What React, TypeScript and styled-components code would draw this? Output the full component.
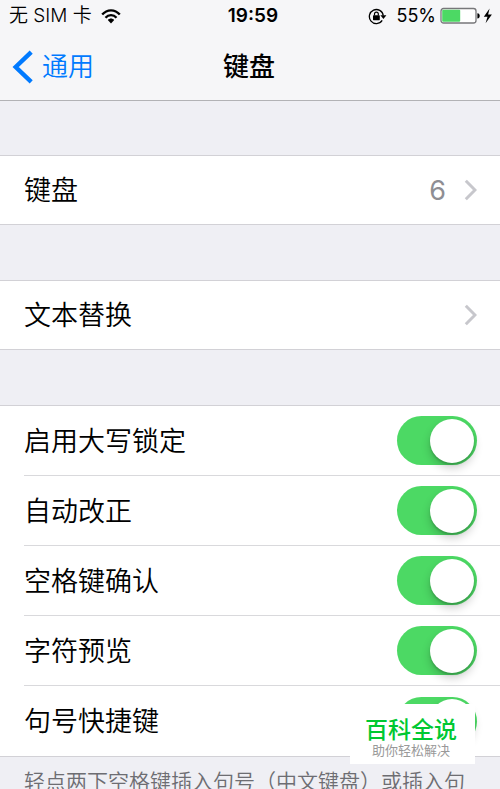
import { useId, useState } from "react";
import styled, { createGlobalStyle } from "styled-components";

const GlobalStyle = createGlobalStyle`
  * { box-sizing: border-box; }
  body {
    margin: 0;
    overflow: hidden;
    background: #efeff4;
    color: #000;
    font-family: Inter, "Noto Sans CJK SC", sans-serif;
    -webkit-font-smoothing: antialiased;
  }
`;

const Screen = styled.div`
  position: relative;
  height: 100vh;
  overflow: hidden;
`;

const Header = styled.header`
  background: #f6f6f8;
  border-bottom: 1px solid #b2b2b5;
`;

const StatusBar = styled.div`
  display: grid;
  grid-template-columns: 1fr auto 1fr;
  align-items: center;
  height: 32px;
  padding: 0 7px 0 9px;
  font-size: 18px;
  line-height: 32px;
`;

const StatusGroup = styled.div<{ $end?: boolean }>`
  display: flex;
  align-items: center;
  justify-content: ${(p) => (p.$end ? "flex-end" : "flex-start")};
  white-space: nowrap;
`;

const Carrier = styled.span`
  margin-right: 9px;
  font-size: 19px;
  font-weight: 350;
`;

const Clock = styled.time`
  padding-left: 4px;
  font-size: 19px;
  font-weight: 600;
`;

const Percent = styled.span`
  margin: 0 4px 0 9px;
`;

const NavBar = styled.nav`
  display: grid;
  grid-template-columns: 1fr auto 1fr;
  align-items: center;
  height: 68px;
  padding: 2px 14px 0 12px;
`;

const BackLink = styled.a`
  display: flex;
  align-items: center;
  gap: 9px;
  color: #007aff;
  font-size: 26px;
  font-weight: 350;
  line-height: 40px;
  text-decoration: none;
`;

const Title = styled.h1`
  margin: 0;
  font-size: 26px;
  font-weight: 500;
  line-height: 40px;
`;

const Settings = styled.main`
  display: grid;
  row-gap: 55px;
  padding-top: 54px;
`;

const Group = styled.section`
  padding-left: 24px;
  background: #fff;
  border-top: 1px solid #d2d1d6;
  border-bottom: 1px solid #d2d1d6;
`;

const LinkRow = styled.a`
  display: flex;
  align-items: center;
  height: 68px;
  padding-right: 23px;
  color: inherit;
  font-size: 27px;
  text-decoration: none;
`;

const RowLabel = styled.span`
  flex: 1;
  padding-top: 2px;
  font-weight: 350;
  line-height: 40px;
`;

const Count = styled.span`
  margin-right: 18px;
  color: #8e8e93;
  font-size: 27px;
`;

const SwitchRow = styled.label`
  display: flex;
  align-items: center;
  height: 70px;
  padding-right: 23px;
  font-size: 27px;
  border-bottom: 1px solid #d9d9dc;

  &:last-child { border-bottom: 0; }
`;

const Switch = styled.input`
  appearance: none;
  display: flex;
  align-items: center;
  width: 80px;
  height: 49px;
  margin: 0;
  padding: 0 3px;
  border-radius: 25px;
  background: #e5e5ea;

  &::before {
    content: "";
    width: 44px;
    height: 44px;
    border-radius: 50%;
    background: #fff;
    box-shadow: 0 5px 10px rgba(0, 0, 0, 0.2), 0 2px 2px rgba(0, 0, 0, 0.15);
  }

  &:checked {
    justify-content: flex-end;
    background: #4cd964;
  }
`;

const FootNote = styled.p`
  margin: 0;
  padding: 9px 0 0 24px;
  color: #6d6d72;
  font-size: 21px;
  font-weight: 350;
  line-height: 32px;
  white-space: nowrap;
`;

const Watermark = styled.aside`
  position: absolute;
  right: 25px;
  bottom: 25px;
  width: 125px;
  height: 60px;
  padding: 13px 3px 0 0;
  background: #fff;
  text-align: center;
`;

const Brand = styled.div`
  color: #00c832;
  font-size: 23px;
  font-weight: 500;
  line-height: 26px;
`;

const Slogan = styled.div`
  color: #999;
  font-size: 13px;
  line-height: 14px;
`;

const WifiIcon = () => (
  <svg width="20" height="15" viewBox="0 0 20 15" aria-hidden="true">
    <g fill="none" stroke="#000" strokeWidth="2.3">
      <path d="M1.2 5.6C6-.1 14-.1 18.8 5.6" />
      <path d="M4.5 8.8c3-3.5 8-3.5 11 0" />
    </g>
    <path d="M6.8 11.1c1.8-2 4.6-2 6.4 0L10 14.6z" />
  </svg>
);

const RotationLockIcon = () => (
  <svg width="19" height="17" viewBox="0 0 19 17" aria-hidden="true">
    <path d="M14.2 12.4A7 7 0 1 1 15.3 7.6" fill="none" stroke="#000" strokeWidth="1.3" />
    <path d="M12.4 7.3h6L15.4 11z" />
    <rect x="5" y="7.3" width="6.8" height="4.9" rx="0.6" />
    <path d="M6.5 7.6V6a1.9 1.9 0 0 1 3.8 0v1.6" fill="none" stroke="#000" strokeWidth="1.2" />
  </svg>
);

const BatteryIcon = () => (
  <svg width="53" height="18" viewBox="0 0 53 18" aria-hidden="true">
    <rect x="1" y="1.5" width="35" height="14.5" rx="2.5" fill="#fff" stroke="#77777a" strokeWidth="1.3" />
    <rect x="2.2" y="2.7" width="18" height="12.1" rx="1" fill="#4cd964" />
    <path d="M37.4 6.2c3.1 0 3.1 5.2 0 5.2z" />
    <path d="M49.6 1.5L43.8 9.7h3.7l-1.9 6.5 6.3-8.6h-3.8z" />
  </svg>
);

const BackIcon = () => (
  <svg width="21" height="34" viewBox="0 0 21 34" aria-hidden="true">
    <path d="M19.2 2.2L3.7 17l15.5 14.8" fill="none" stroke="#007aff" strokeWidth="4.4" />
  </svg>
);

const DisclosureIcon = () => (
  <svg width="13" height="22" viewBox="0 0 13 22" aria-hidden="true">
    <path d="M1.8 1.8L11 11l-9.2 9.2" fill="none" stroke="#c7c7cc" strokeWidth="3" />
  </svg>
);

function SwitchItem({ label }: { label: string }) {
  const id = useId();
  const [on, setOn] = useState(true);
  return (
    <SwitchRow htmlFor={id}>
      <RowLabel>{label}</RowLabel>
      <Switch id={id} type="checkbox" role="switch" checked={on} onChange={() => setOn(!on)} />
    </SwitchRow>
  );
}

const options = ["启用大写锁定", "自动改正", "空格键确认", "字符预览", "句号快捷键"];

export default function App() {
  return (
    <Screen lang="zh-CN">
      <GlobalStyle />
      <Header>
        <StatusBar>
          <StatusGroup>
            <Carrier>无 SIM 卡</Carrier>
            <WifiIcon />
          </StatusGroup>
          <Clock>19:59</Clock>
          <StatusGroup $end>
            <RotationLockIcon />
            <Percent>55%</Percent>
            <BatteryIcon />
          </StatusGroup>
        </StatusBar>
        <NavBar>
          <BackLink href="#general">
            <BackIcon />
            通用
          </BackLink>
          <Title>键盘</Title>
        </NavBar>
      </Header>
      <Settings>
        <Group>
          <LinkRow href="#keyboards">
            <RowLabel>键盘</RowLabel>
            <Count>6</Count>
            <DisclosureIcon />
          </LinkRow>
        </Group>
        <Group>
          <LinkRow href="#replacement">
            <RowLabel>文本替换</RowLabel>
            <DisclosureIcon />
          </LinkRow>
        </Group>
        <div>
          <Group>
            {options.map((label) => (
              <SwitchItem key={label} label={label} />
            ))}
          </Group>
          <FootNote>轻点两下空格键插入句号（中文键盘）或插入句</FootNote>
        </div>
      </Settings>
      <Watermark>
        <Brand>百科全说</Brand>
        <Slogan>助你轻松解决</Slogan>
      </Watermark>
    </Screen>
  );
}
